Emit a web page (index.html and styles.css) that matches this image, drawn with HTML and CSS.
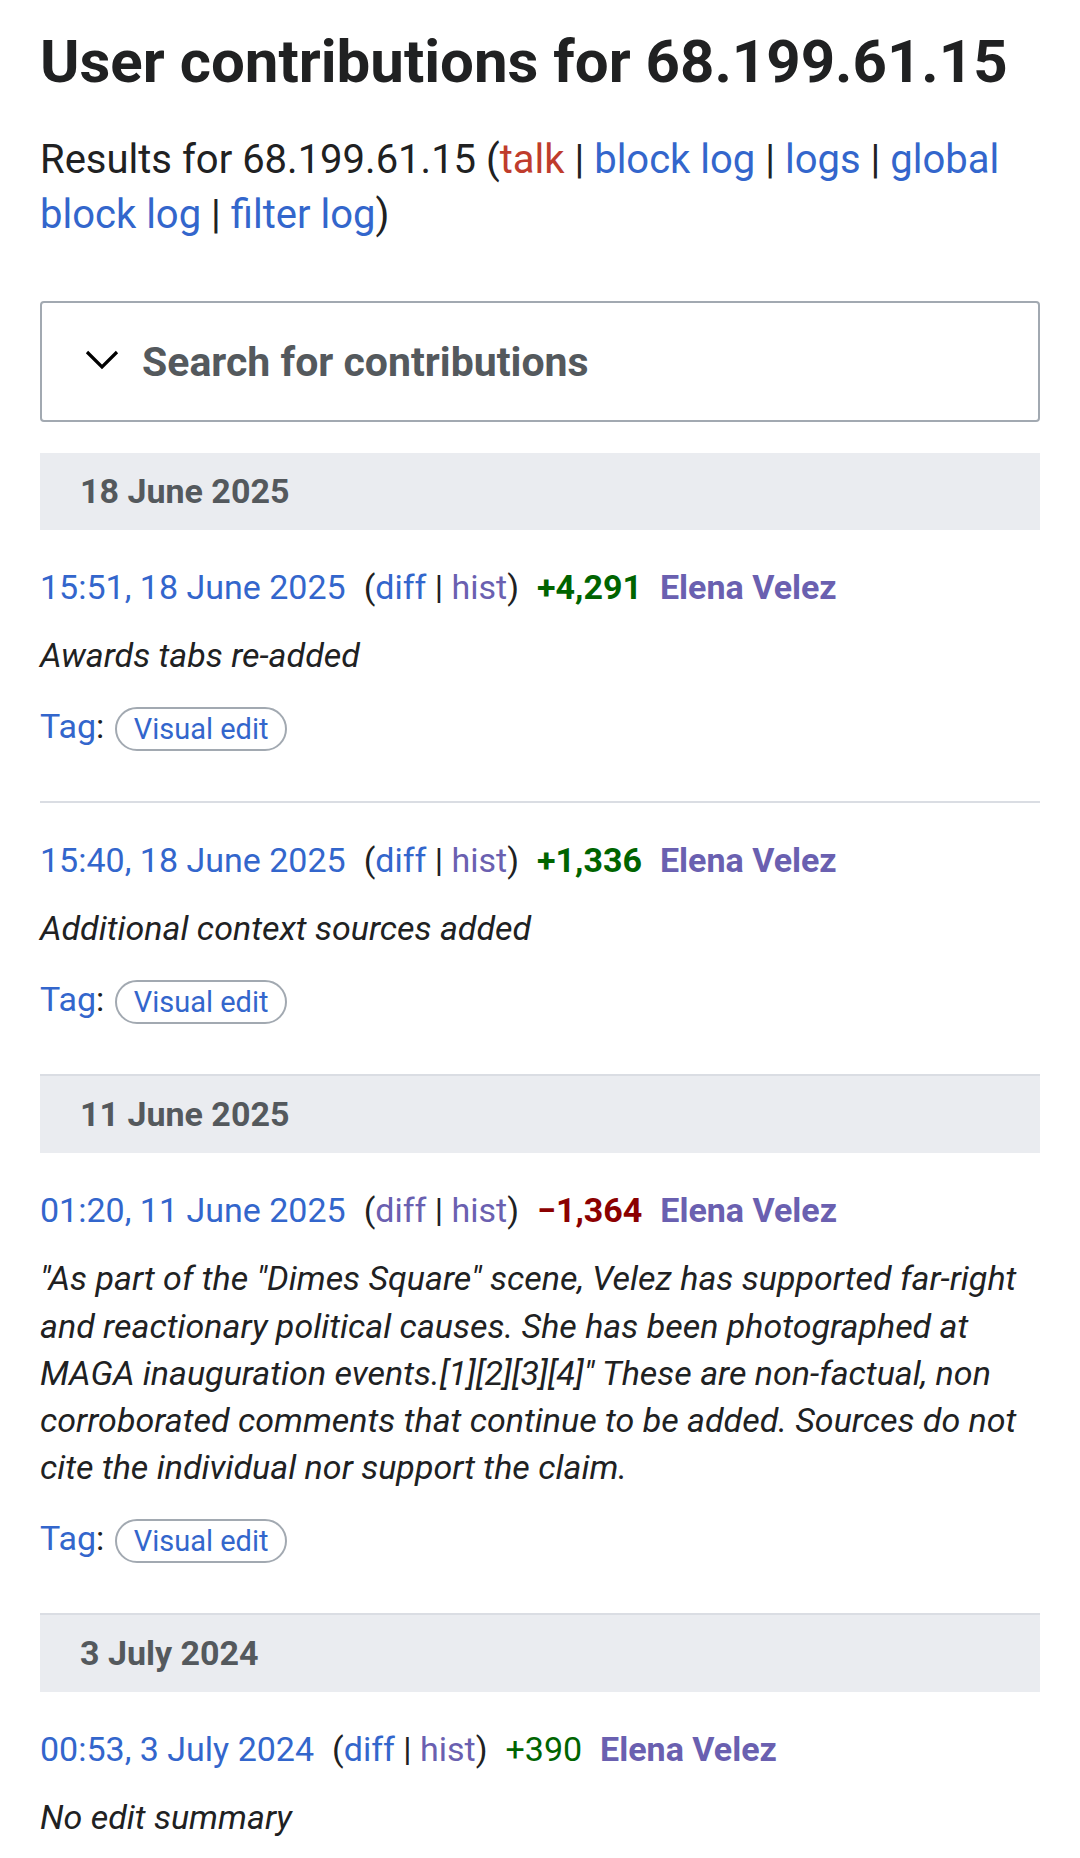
FILE: index.html
```html
<!DOCTYPE html>
<html lang="en">
<head>
    <meta charset="UTF-8">
    <meta name="viewport" content="width=device-width, initial-scale=1.0">
    <title>User contributions for 68.199.61.15</title>
    <link rel="stylesheet" href="styles.css">
</head>
<body>

<div class="page">
    <h1 class="title">User contributions for 68.199.61.15</h1>

    <p class="results">Results for 68.199.61.15 (<a class="redlink" href="#">talk</a> | <a href="#">block log</a> | <a href="#">logs</a> | <a href="#">global block log</a> | <a href="#">filter log</a>)</p>

    <div class="search-box">
        <svg class="chevron" width="36" height="22" viewBox="0 0 36 22">
            <polyline points="3,3 18,18 33,3" fill="none" stroke="#000" stroke-width="3.2"/>
        </svg>
        <span>Search for contributions</span>
    </div>

    <h4 class="day">18 June 2025</h4>
    <ul class="changes">
        <li>
            <div class="line">
                <a href="#">15:51, 18 June 2025</a>
                <span>(<a href="#">diff</a> | <a class="visited" href="#">hist</a>)</span>
                <strong class="plus">+4,291</strong>
                <strong class="visited">Elena Velez</strong>
            </div>
            <p class="summary">Awards tabs re-added</p>
            <div class="tags"><a href="#">Tag</a>: <span class="pill">Visual edit</span></div>
        </li>
        <li>
            <div class="line">
                <a href="#">15:40, 18 June 2025</a>
                <span>(<a href="#">diff</a> | <a class="visited" href="#">hist</a>)</span>
                <strong class="plus">+1,336</strong>
                <strong class="visited">Elena Velez</strong>
            </div>
            <p class="summary">Additional context sources added</p>
            <div class="tags"><a href="#">Tag</a>: <span class="pill">Visual edit</span></div>
        </li>
    </ul>

    <h4 class="day">11 June 2025</h4>
    <ul class="changes">
        <li>
            <div class="line">
                <a href="#">01:20, 11 June 2025</a>
                <span>(<a class="visited" href="#">diff</a> | <a class="visited" href="#">hist</a>)</span>
                <strong class="minus">&minus;1,364</strong>
                <strong class="visited">Elena Velez</strong>
            </div>
            <p class="summary">"As part of the "Dimes Square" scene, Velez has supported far-right and reactionary political causes. She has been photographed at MAGA inauguration events.[1][2][3][4]" These are non-factual, non corroborated comments that continue to be added. Sources do not cite the individual nor support the claim.</p>
            <div class="tags"><a href="#">Tag</a>: <span class="pill">Visual edit</span></div>
        </li>
    </ul>

    <h4 class="day">3 July 2024</h4>
    <ul class="changes">
        <li>
            <div class="line">
                <a href="#">00:53, 3 July 2024</a>
                <span>(<a href="#">diff</a> | <a class="visited" href="#">hist</a>)</span>
                <span class="plus">+390</span>
                <strong class="visited">Elena Velez</strong>
            </div>
            <p class="summary">No edit summary</p>
        </li>
    </ul>
</div>

</body>
</html>
```

FILE: styles.css
```css
body {
    font-family: Roboto, "Noto Sans", Arial, sans-serif;
    color: #202122;
    background-color: white;
    margin: 0;
}
a {
    color: #3366cc;
    text-decoration: none;
}
a.redlink {
    color: #bf3c2c;
}
.visited {
    color: #6a60b0;
}
.page {
    padding: 25px 40px 0;
}
.title {
    font-size: 60px;
    line-height: 74px;
    font-weight: bold;
    margin: 0;
}
.results {
    font-size: 40px;
    line-height: 55px;
    margin: 33px 0 0;
}
.search-box {
    margin-top: 59px;
    height: 117px;
    border: 2px solid #a2a9b1;
    border-radius: 4px;
    display: flex;
    align-items: center;
    gap: 22px;
    padding: 0 42px;
    color: #54595d;
    font-size: 41px;
    font-weight: bold;
}
.chevron {
    margin-top: -4px;
}
.day {
    margin: 31px 0 0;
    background-color: #eaecf0;
    color: #54595d;
    font-size: 34px;
    font-weight: bold;
    height: 77px;
    line-height: 77px;
    padding: 0 40px;
}
.changes + .day {
    margin-top: 0;
}
.changes {
    list-style: none;
    margin: 0;
    padding: 0;
}
.changes li {
    font-size: 34px;
    padding: 30px 0 50px;
    border-bottom: 2px solid #dadde3;
}
.line {
    display: flex;
    align-items: center;
    gap: 18px;
    line-height: 54px;
    white-space: nowrap;
}
.plus {
    color: #006400;
}
.minus {
    color: #8b0000;
}
.summary {
    font-style: italic;
    line-height: 47.2px;
    margin: 18px 0 0;
}
.tags {
    margin-top: 23px;
    line-height: 48px;
}
.pill {
    display: inline-block;
    color: #3366cc;
    font-size: 29px;
    line-height: 40px;
    padding: 0 17px;
    border: 2px solid #a2a9b1;
    border-radius: 22px;
    vertical-align: middle;
    margin-left: 2px;
}
```
